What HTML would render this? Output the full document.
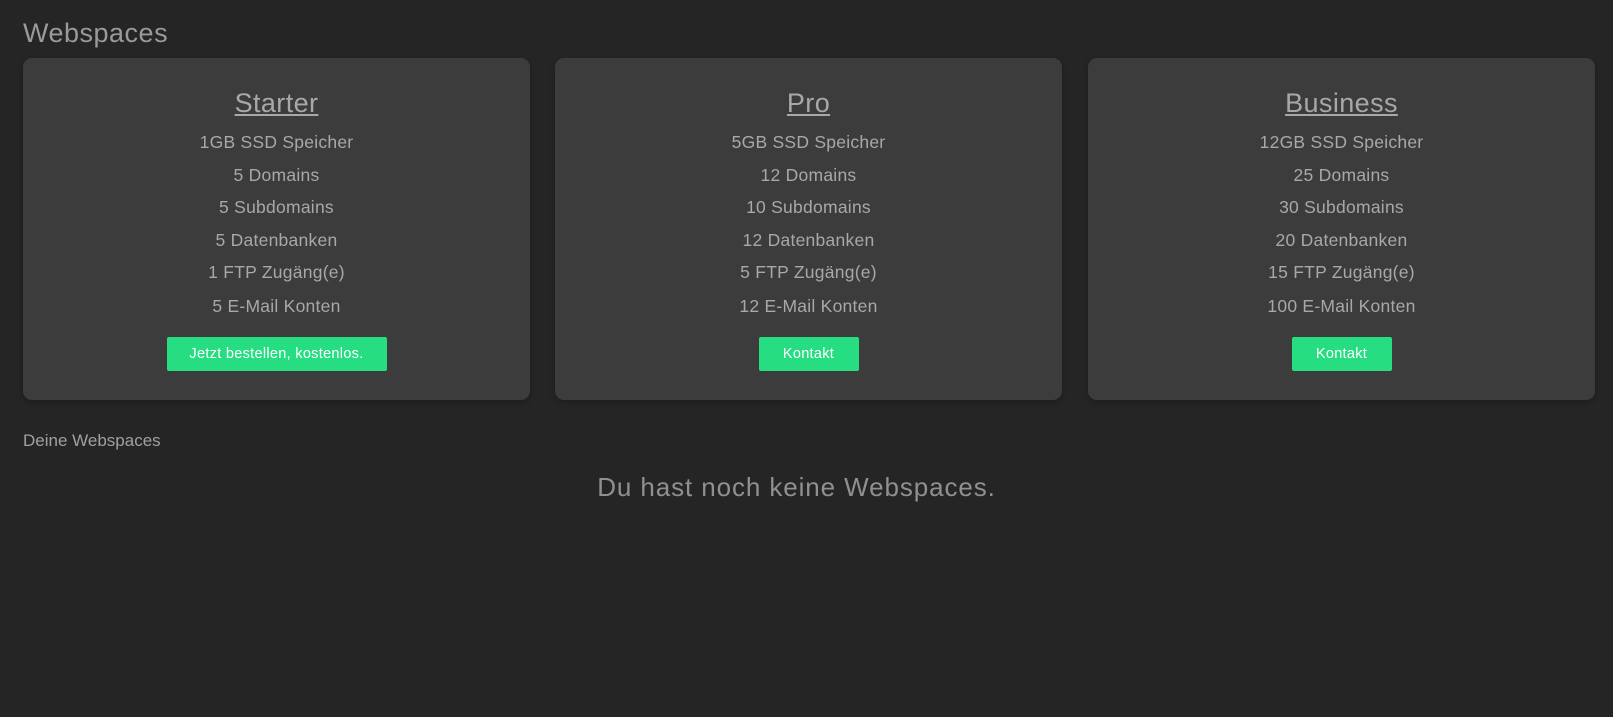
<!DOCTYPE html>
<html><head><meta charset="utf-8"><style>
body{margin:0;width:1613px;height:717px;background:#252525;font-family:"Liberation Sans",sans-serif;overflow:hidden;position:relative}
h1{position:absolute;left:23px;top:18px;margin:0;font-size:27px;letter-spacing:0.5px;font-weight:normal;color:#9a9a9a}
.card{position:absolute;top:58px;width:507px;height:342px;background:#3c3c3c;border-radius:9px;box-shadow:0 2px 6px rgba(0,0,0,.25);text-align:center;color:#a8a8a8}
.card h2{margin:0;position:absolute;left:0;right:0;font-size:27px;letter-spacing:0.4px;font-weight:normal;text-decoration:underline;line-height:30px;color:#a8a8a8}
.row{position:absolute;left:0;right:0;font-size:17.5px;letter-spacing:0.25px;line-height:22px}
.btn{position:absolute;top:279px;height:34px;line-height:34px;background:#26dd82;color:#fff;font-size:14.5px;letter-spacing:0.3px;border-radius:2px;left:50%;transform:translateX(-50%)}
.sub{position:absolute;left:23px;top:431px;font-size:17px;color:#a0a0a0}
.none{position:absolute;left:0;width:1593px;text-align:center;top:472px;font-size:26px;letter-spacing:0.9px;color:#909090}
</style></head><body>
<h1>Webspaces</h1>
<div class="card" style="left:23px">
<h2 style="top:30px">Starter</h2>
<div class="row" style="top:73px">1GB SSD Speicher</div>
<div class="row" style="top:106px">5 Domains</div>
<div class="row" style="top:138px">5 Subdomains</div>
<div class="row" style="top:171px">5 Datenbanken</div>
<div class="row" style="top:203px">1 FTP Zugäng(e)</div>
<div class="row" style="top:237px">5 E-Mail Konten</div>
<div class="btn" style="width:220px">Jetzt bestellen, kostenlos.</div>
</div>
<div class="card" style="left:555px">
<h2 style="top:30px">Pro</h2>
<div class="row" style="top:73px">5GB SSD Speicher</div>
<div class="row" style="top:106px">12 Domains</div>
<div class="row" style="top:138px">10 Subdomains</div>
<div class="row" style="top:171px">12 Datenbanken</div>
<div class="row" style="top:203px">5 FTP Zugäng(e)</div>
<div class="row" style="top:237px">12 E-Mail Konten</div>
<div class="btn" style="width:100px">Kontakt</div>
</div>
<div class="card" style="left:1088px">
<h2 style="top:30px">Business</h2>
<div class="row" style="top:73px">12GB SSD Speicher</div>
<div class="row" style="top:106px">25 Domains</div>
<div class="row" style="top:138px">30 Subdomains</div>
<div class="row" style="top:171px">20 Datenbanken</div>
<div class="row" style="top:203px">15 FTP Zugäng(e)</div>
<div class="row" style="top:237px">100 E-Mail Konten</div>
<div class="btn" style="width:100px">Kontakt</div>
</div>
<div class="sub">Deine Webspaces</div>
<div class="none">Du hast noch keine Webspaces.</div>
</body></html>
